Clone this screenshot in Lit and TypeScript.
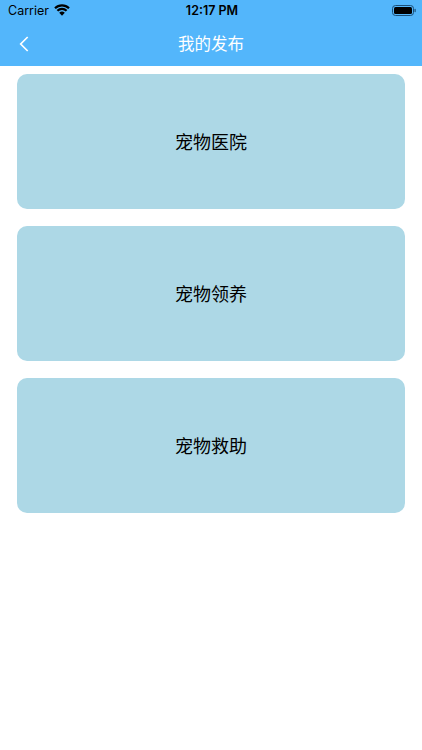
import { LitElement, html, css } from "lit";
import { customElement } from "lit/decorators.js";

@customElement("app-root")
export class AppRoot extends LitElement {
  static styles = css`
    :host {
      display: block;
      width: 422px;
      height: 750px;
      background: #fff;
      font-family: "Noto Sans CJK SC", "Liberation Sans", sans-serif;
      overflow: hidden;
    }
    .top {
      height: 66px;
      background: #53b6fb;
      display: flex;
      flex-direction: column;
    }
    .status {
      height: 22px;
      display: grid;
      grid-template-columns: 1fr auto 1fr;
      align-items: center;
      padding: 0 6px 1px 8px;
      box-sizing: border-box;
      color: #000;
      font-family: Inter, "Liberation Sans", sans-serif;
      font-size: 12.5px;
    }
    .left {
      display: flex;
      align-items: center;
      gap: 5px;
    }
    .wifi {
      margin-top: -2px;
    }
    .time {
      font-weight: 600;
    }
    .right {
      display: flex;
      justify-content: flex-end;
    }
    .nav {
      height: 44px;
      display: flex;
      align-items: center;
      justify-content: center;
      position: relative;
      color: #fff;
      font-size: 16.5px;
      padding-bottom: 3px;
      box-sizing: border-box;
    }
    .back {
      position: absolute;
      left: 18px;
      top: 13px;
    }
    .list {
      display: flex;
      flex-direction: column;
      gap: 17px;
      padding: 8px 17px;
    }
    .card {
      height: 135px;
      box-sizing: border-box;
      padding-bottom: 2px;
      background: #add8e6;
      border-radius: 10px;
      display: flex;
      align-items: center;
      justify-content: center;
      font-size: 18px;
      color: #000;
    }
  `;

  render() {
    return html`
      <div class="top">
        <div class="status">
          <div class="left">
            <span>Carrier</span>
            <svg class="wifi" width="16" height="12" viewBox="0 0 16 12">
              <path d="M1 4.2a10 10 0 0 1 14 0" fill="none" stroke="#000" stroke-width="2.2" />
              <path d="M3.4 6.8a6.5 6.5 0 0 1 9.2 0" fill="none" stroke="#000" stroke-width="2.2" />
              <path d="M5.2 8.8a4 4 0 0 1 5.6 0L8 11.8z" fill="#000" />
            </svg>
          </div>
          <span class="time">12:17 PM</span>
          <div class="right">
            <svg width="24" height="11" viewBox="0 0 24 11">
              <rect x="0.5" y="0.5" width="21" height="10" rx="3" fill="none" stroke="#1b4f78" />
              <rect x="2" y="2" width="18" height="7" rx="1.5" fill="#000" />
              <rect x="22.5" y="3.8" width="1.2" height="3.4" rx="0.6" fill="#1b4f78" />
            </svg>
          </div>
        </div>
        <div class="nav">
          <svg class="back" width="12" height="18" viewBox="0 0 12 18">
            <path d="M9.7 2L2.7 9l7 7" fill="none" stroke="#fff" stroke-width="1.7" />
          </svg>
          <span>我的发布</span>
        </div>
      </div>
      <div class="list">
        ${["宠物医院", "宠物领养", "宠物救助"].map((t) => html`<div class="card">${t}</div>`)}
      </div>
    `;
  }
}
